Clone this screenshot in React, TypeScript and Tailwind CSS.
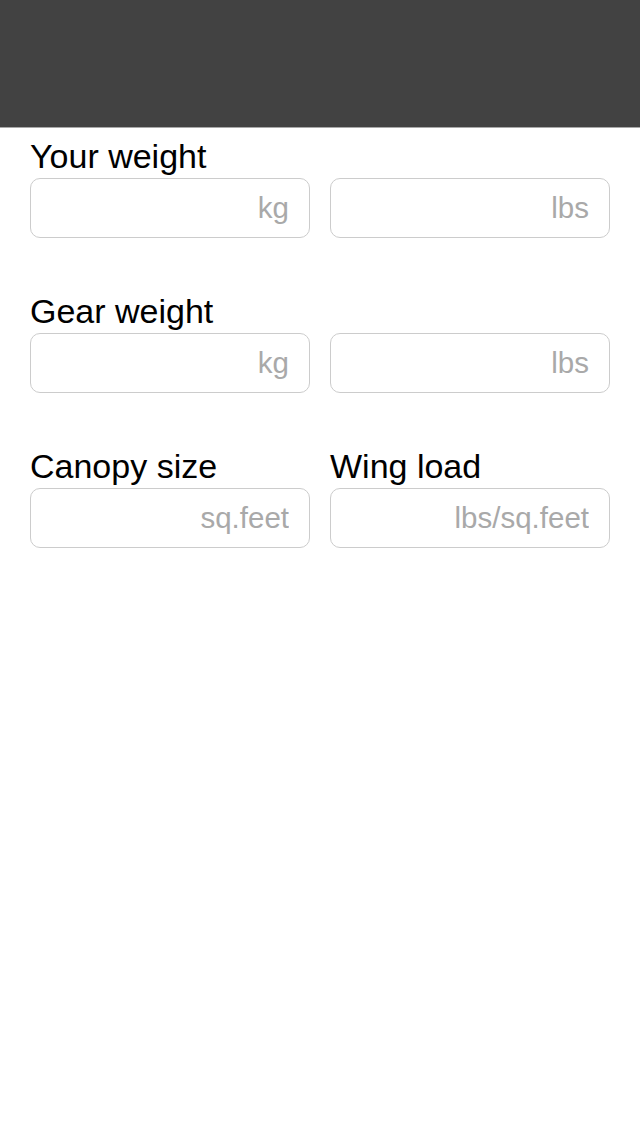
const Field = ({ unit }: { unit: string }) => {
  return (
    <input
      type="text"
      placeholder={unit}
      className="w-[280px] h-[60px] box-border rounded-[10px] border border-[#cccccc] bg-white pr-5 pl-4 pb-[1px] text-right text-[29.5px] text-black placeholder:text-[#a9a9a9] outline-none"
    />
  );
};

const Row = ({ left, right, units }: { left: string; right?: string; units: [string, string] }) => {
  return (
    <div className="flex flex-col">
      <div className="flex gap-5">
        <span className="w-[280px] text-[34px] leading-[37px] text-black">{left}</span>
        {right && <span className="w-[280px] text-[34px] leading-[37px] text-black">{right}</span>}
      </div>
      <div className="flex gap-5 mt-[3px]">
        <Field unit={units[0]} />
        <Field unit={units[1]} />
      </div>
    </div>
  );
};

const App = () => {
  return (
    <div
      className="w-[640px] h-[1136px] bg-white"
      style={{ fontFamily: '"Liberation Sans", Arial, sans-serif' }}
    >
      <div className="h-[128px] bg-[#424242] border-b border-[#a8a8a8]" />
      <div className="px-[30px] pt-[10px] flex flex-col gap-[55px]">
        <Row left="Your weight" units={["kg", "lbs"]} />
        <Row left="Gear weight" units={["kg", "lbs"]} />
        <Row left="Canopy size" right="Wing load" units={["sq.feet", "lbs/sq.feet"]} />
      </div>
    </div>
  );
};

export default App;
